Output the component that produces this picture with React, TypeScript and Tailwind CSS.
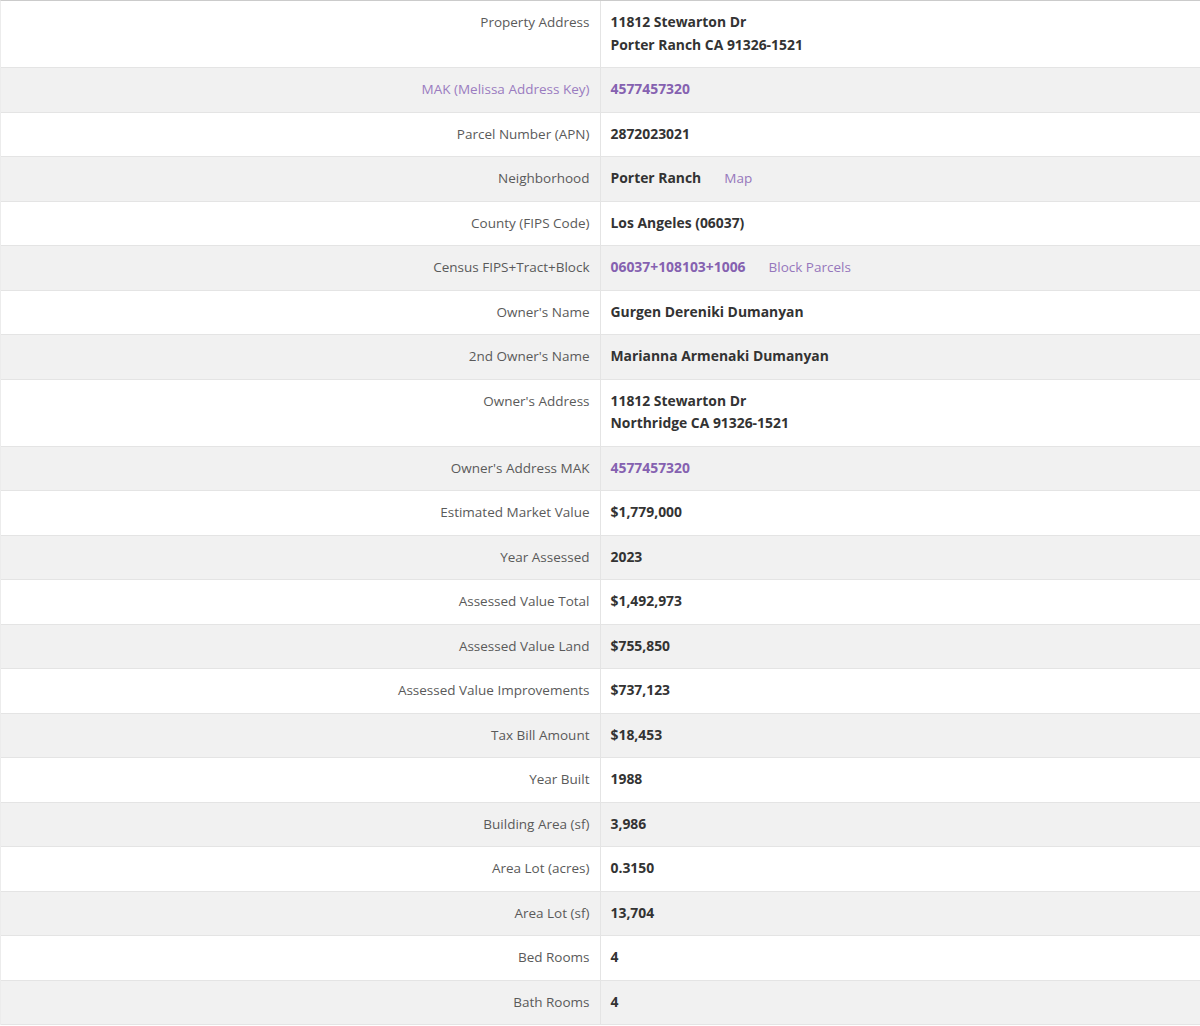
import React from "react";

type Row = {
  label: string;
  lines: string[];
  labelLink?: boolean;
  valueLink?: boolean;
  extra?: string;
};

const rows: Row[] = [
  { label: "Property Address", lines: ["11812 Stewarton Dr", "Porter Ranch CA 91326-1521"] },
  { label: "MAK (Melissa Address Key)", lines: ["4577457320"], labelLink: true, valueLink: true },
  { label: "Parcel Number (APN)", lines: ["2872023021"] },
  { label: "Neighborhood", lines: ["Porter Ranch"], extra: "Map" },
  { label: "County (FIPS Code)", lines: ["Los Angeles (06037)"] },
  { label: "Census FIPS+Tract+Block", lines: ["06037+108103+1006"], valueLink: true, extra: "Block Parcels" },
  { label: "Owner's Name", lines: ["Gurgen Dereniki Dumanyan"] },
  { label: "2nd Owner's Name", lines: ["Marianna Armenaki Dumanyan"] },
  { label: "Owner's Address", lines: ["11812 Stewarton Dr", "Northridge CA 91326-1521"] },
  { label: "Owner's Address MAK", lines: ["4577457320"], valueLink: true },
  { label: "Estimated Market Value", lines: ["$1,779,000"] },
  { label: "Year Assessed", lines: ["2023"] },
  { label: "Assessed Value Total", lines: ["$1,492,973"] },
  { label: "Assessed Value Land", lines: ["$755,850"] },
  { label: "Assessed Value Improvements", lines: ["$737,123"] },
  { label: "Tax Bill Amount", lines: ["$18,453"] },
  { label: "Year Built", lines: ["1988"] },
  { label: "Building Area (sf)", lines: ["3,986"] },
  { label: "Area Lot (acres)", lines: ["0.3150"] },
  { label: "Area Lot (sf)", lines: ["13,704"] },
  { label: "Bed Rooms", lines: ["4"] },
  { label: "Bath Rooms", lines: ["4"] },
];

export default function App() {
  return (
    <div className="w-[1200px] bg-white font-['Open_Sans',sans-serif]">
      <div className="border-t border-[#cbcbcb] border-l border-l-[#ececec]">
        {rows.map((r, i) => (
          <div
            key={i}
            className={`grid grid-cols-2 border-b border-[#e4e4e4] ${i % 2 === 1 ? "bg-[#f1f1f1]" : "bg-white"}`}
          >
            <div
              className={`border-r border-[#e4e4e4] pt-[10.25px] pb-[10.75px] pr-[10px] text-right text-[13.5px] leading-[22.5px] ${
                r.labelLink ? "text-[#9a7cc0]" : "text-[#5a5a5a]"
              }`}
            >
              {r.label}
            </div>
            <div className="pt-[10.25px] pb-[10.75px] pl-[10px] text-[13.9px] leading-[22.5px]">
              {r.lines.map((l, j) => (
                <div key={j} className="flex items-baseline">
                  <span className={`font-bold ${r.valueLink ? "text-[#8561b0]" : "text-[#333333]"}`}>{l}</span>
                  {r.extra && j === 0 && <span className="ml-[23px] text-[13.5px] text-[#9677bc]">{r.extra}</span>}
                </div>
              ))}
            </div>
          </div>
        ))}
      </div>
    </div>
  );
}
